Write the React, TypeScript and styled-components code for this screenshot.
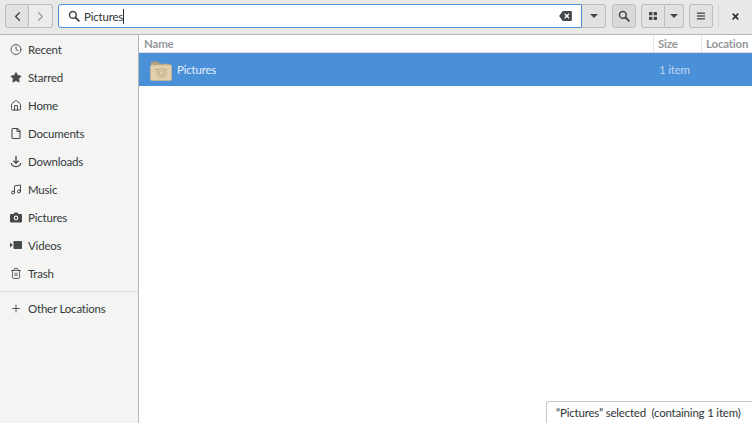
import React from 'react';
import styled, { createGlobalStyle } from 'styled-components';
import { ChevronLeft, ChevronRight, Clock, Star, House, File, Music, Plus, Trash2 } from 'lucide-react';

const Global = createGlobalStyle`
  html, body { margin: 0; padding: 0; height: 100%; }
  #root { height: 100%; }
  body { font-family: Lato, "Open Sans", sans-serif; font-size: 11.5px; letter-spacing: -0.2px; color: #2e3436; overflow: hidden; }
`;

const Win = styled.div`
  width: 752px;
  height: 423px;
  display: flex;
  flex-direction: column;
  background: #fff;
  position: relative;
  overflow: hidden;
`;

const Toolbar = styled.header`
  height: 35px;
  flex: none;
  box-sizing: border-box;
  display: flex;
  align-items: center;
  padding: 0 0 2px 5px;
  background: #e8e8e7;
  border-bottom: 1px solid #b6b6b3;
`;

const Group = styled.div<{ $ml?: number }>`
  display: flex;
  margin-left: ${({ $ml }) => $ml ?? 0}px;
`;

const Btn = styled.div<{ $w?: number; $dim?: boolean; $dark?: boolean; $joinL?: boolean; $joinR?: boolean }>`
  width: ${({ $w }) => $w ?? 24}px;
  height: 24px;
  box-sizing: border-box;
  display: flex;
  align-items: center;
  justify-content: center;
  border: 1px solid #bcbcb9;
  border-left-width: ${({ $joinL }) => ($joinL ? 0 : 1)}px;
  border-radius: ${({ $joinL, $joinR }) => `${$joinL ? 0 : 3}px ${$joinR ? 0 : 3}px ${$joinR ? 0 : 3}px ${$joinL ? 0 : 3}px`};
  background: ${({ $dim, $dark }) => ($dim ? '#ececeb' : $dark ? '#d9d9d7' : '#e1e1df')};
  color: ${({ $dim }) => ($dim ? '#9aa0a0' : '#41474a')};
`;

const Entry = styled.div`
  width: 524px;
  height: 24px;
  margin-left: 5px;
  box-sizing: border-box;
  display: flex;
  align-items: center;
  padding: 0 9px 0 9px;
  background: #fff;
  border: 1px solid #4a90d9;
  border-radius: 3px 0 0 3px;
`;

const EntryText = styled.span`
  margin-left: 4px;
  flex: 1;
  display: flex;
  align-items: center;
`;

const Caret = styled.i`
  width: 1px;
  height: 15px;
  background: #2e3436;
`;

const Arrow = styled.i`
  width: 0;
  height: 0;
  border-left: 4px solid transparent;
  border-right: 4px solid transparent;
  border-top: 4px solid #41474a;
`;

const Divider = styled.i`
  width: 1px;
  height: 24px;
  margin-left: 5px;
  background: #d5d5d3;
`;

const Close = styled.div`
  flex: 1;
  display: flex;
  justify-content: center;
  align-items: center;
`;

const Body = styled.div`
  flex: 1;
  display: flex;
  min-height: 0;
`;

const Sidebar = styled.nav`
  width: 139px;
  flex: none;
  box-sizing: border-box;
  background: #f4f4f3;
  border-right: 1px solid #b6b6b3;
`;

const Place = styled.div`
  height: 28px;
  display: flex;
  align-items: center;
  gap: 6px;
  padding-left: 10px;
  color: #33393b;
`;

const IconSlot = styled.span`
  width: 12px;
  height: 12px;
  display: flex;
  align-items: center;
  justify-content: center;
  color: #45494b;
`;

const Sep = styled.hr`
  margin: 4px 0 2px;
  border: 0;
  height: 1px;
  background: #dededc;
`;

const Main = styled.main`
  flex: 1;
  min-width: 0;
  display: flex;
  flex-direction: column;
`;

const Cols = styled.div`
  height: 18px;
  flex: none;
  display: grid;
  grid-template-columns: 514px 48px 1fr;
  box-sizing: border-box;
  border-bottom: 1px solid #dcdcda;
`;

const Col = styled.div`
  display: flex;
  align-items: center;
  padding-left: 5px;
  font-weight: 700;
  color: #95989a;
  white-space: nowrap;
  & + & { border-left: 1px solid #e4e4e2; padding-left: 4px; }
`;

const Row = styled.div`
  height: 33px;
  flex: none;
  display: grid;
  grid-template-columns: 514px 48px 1fr;
  align-items: center;
  background: #4a90d9;
  color: #fff;
`;

const NameCell = styled.div`
  display: flex;
  align-items: center;
  gap: 5px;
  padding-left: 11px;
  color: #e4eefa;
`;

const SizeCell = styled.div`
  padding-left: 6px;
  color: #bcd6f1;
`;

const Status = styled.div`
  position: absolute;
  right: 0;
  bottom: 0;
  width: 206px;
  height: 22px;
  box-sizing: border-box;
  display: flex;
  align-items: center;
  padding-left: 9px;
  background: #fff;
  border: 1px solid #c8c8c6;
  border-width: 1px 0 0 1px;
  border-top-left-radius: 3px;
  white-space: pre;
  color: #2e3436;
`;

const Search = ({ size = 12 }: { size?: number }) => (
  <svg width={size} height={size} viewBox="0 0 16 16" fill="none" stroke="#41474a" strokeWidth="2">
    <circle cx="6.5" cy="6.5" r="4.5" />
    <path d="M10 10l4.5 4.5" strokeLinecap="round" strokeWidth="2.4" />
  </svg>
);

const ClearIcon = () => (
  <svg width="13" height="10" viewBox="0 0 14 11">
    <path fillRule="evenodd" fill="#41474a" d="M4 0h9a1 1 0 0 1 1 1v9a1 1 0 0 1-1 1H4L0 5.5zM6.6 2.6L5.6 3.6l1.9 1.9-1.9 1.9 1 1 1.9-1.9 1.9 1.9 1-1-1.9-1.9 1.9-1.9-1-1-1.9 1.9z" />
  </svg>
);

const GridIcon = () => (
  <svg width="8" height="8" viewBox="0 0 10 10" fill="#41474a">
    <rect x="0" y="0" width="4.2" height="4.2" rx="0.6" />
    <rect x="5.8" y="0" width="4.2" height="4.2" rx="0.6" />
    <rect x="0" y="5.8" width="4.2" height="4.2" rx="0.6" />
    <rect x="5.8" y="5.8" width="4.2" height="4.2" rx="0.6" />
  </svg>
);

const MenuIcon = () => (
  <svg width="8" height="8" viewBox="0 0 8 8" fill="#41474a">
    <rect y="0.5" width="8" height="1.3" />
    <rect y="3.35" width="8" height="1.3" />
    <rect y="6.2" width="8" height="1.3" />
  </svg>
);

const CloseIcon = () => (
  <svg width="7" height="7" viewBox="0 0 7 7" stroke="#2e3436" strokeWidth="1.7">
    <path d="M0.7 0.7l5.6 5.6M6.3 0.7l-5.6 5.6" />
  </svg>
);

const CameraIcon = () => (
  <svg width="12" height="11" viewBox="0 0 12 11">
    <path fillRule="evenodd" fill="#45494b" d="M1 2h2.5L4.5.5h3L8.5 2H11a1 1 0 0 1 1 1v6.5a1 1 0 0 1-1 1H1a1 1 0 0 1-1-1V3a1 1 0 0 1 1-1zM6 3.6a2.3 2.3 0 1 0 0 4.6 2.3 2.3 0 0 0 0-4.6z" />
    <circle cx="6" cy="5.9" r="1.2" fill="#45494b" />
  </svg>
);

const VideoIcon = () => (
  <svg width="12" height="8" viewBox="0 0 12 8" fill="#45494b">
    <rect x="3.5" width="8.5" height="8" rx="0.8" />
    <path d="M0 1.5L2.8 4 0 6.5z" />
  </svg>
);

const DownloadIcon = () => (
  <svg width="13" height="13" viewBox="0 0 13 13" fill="none" stroke="#45494b" strokeWidth="1.5">
    <path d="M6.5 0.5v7.5" />
    <path d="M3.8 5.6L6.5 8.4l2.7-2.8" />
    <path d="M1.5 8.2c0 2.4 2 3.8 5 3.8s5-1.4 5-3.8" strokeWidth="1.3" />
  </svg>
);

const FolderPictures = () => (
  <svg width="22" height="22" viewBox="0 0 22 22">
    <path d="M1 3.5a1 1 0 0 1 1-1h6l2 2.2h9a1.5 1.5 0 0 1 1.5 1.5V8H1z" fill="#b39f7c" />
    <rect x="0.5" y="6" width="21" height="15.5" rx="1.2" fill="#e3cfab" stroke="#c9b591" strokeWidth="0.8" />
    <g fill="none" stroke="#b5a482" strokeWidth="0.9">
      <circle cx="11.5" cy="14" r="4.6" />
      <circle cx="11.5" cy="14" r="2.4" />
      <path d="M5 10.5h3.5M14.5 10.5h3" />
    </g>
  </svg>
);

const places: { label: string; icon: React.ReactNode }[] = [
  { label: 'Recent', icon: <Clock size={13} strokeWidth={1.8} /> },
  { label: 'Starred', icon: <Star size={13} fill="currentColor" strokeWidth={1.5} /> },
  { label: 'Home', icon: <House size={13} strokeWidth={2} /> },
  { label: 'Documents', icon: <File size={13} strokeWidth={2.1} /> },
  { label: 'Downloads', icon: <DownloadIcon /> },
  { label: 'Music', icon: <Music size={13} strokeWidth={2} /> },
  { label: 'Pictures', icon: <CameraIcon /> },
  { label: 'Videos', icon: <VideoIcon /> },
  { label: 'Trash', icon: <Trash2 size={13} strokeWidth={1.7} /> },
];

export default function App() {
  return (
    <Win>
      <Global />
      <Toolbar>
        <Group>
          <Btn $joinR>
            <ChevronLeft size={15} strokeWidth={2.2} />
          </Btn>
          <Btn $joinL $dim>
            <ChevronRight size={15} strokeWidth={2} />
          </Btn>
        </Group>
        <Entry>
          <Search />
          <EntryText>
            Pictures
            <Caret />
          </EntryText>
          <ClearIcon />
        </Entry>
        <Btn $joinL>
          <Arrow />
        </Btn>
        <Group $ml={6}>
          <Btn $dark>
            <Search />
          </Btn>
        </Group>
        <Group $ml={5}>
          <Btn $joinR>
            <GridIcon />
          </Btn>
          <Btn $joinL $w={19}>
            <Arrow />
          </Btn>
        </Group>
        <Group $ml={5}>
          <Btn>
            <MenuIcon />
          </Btn>
        </Group>
        <Divider />
        <Close>
          <CloseIcon />
        </Close>
      </Toolbar>
      <Body>
        <Sidebar>
          {places.map((p) => (
            <Place key={p.label}>
              <IconSlot>{p.icon}</IconSlot>
              {p.label}
            </Place>
          ))}
          <Sep />
          <Place>
            <IconSlot>
              <Plus size={13} strokeWidth={1.8} />
            </IconSlot>
            Other Locations
          </Place>
        </Sidebar>
        <Main>
          <Cols>
            <Col>Name</Col>
            <Col>Size</Col>
            <Col>Location</Col>
          </Cols>
          <Row>
            <NameCell>
              <FolderPictures />
              Pictures
            </NameCell>
            <SizeCell>1 item</SizeCell>
            <div />
          </Row>
        </Main>
      </Body>
      <Status>“Pictures” selected  (containing 1 item)</Status>
    </Win>
  );
}
